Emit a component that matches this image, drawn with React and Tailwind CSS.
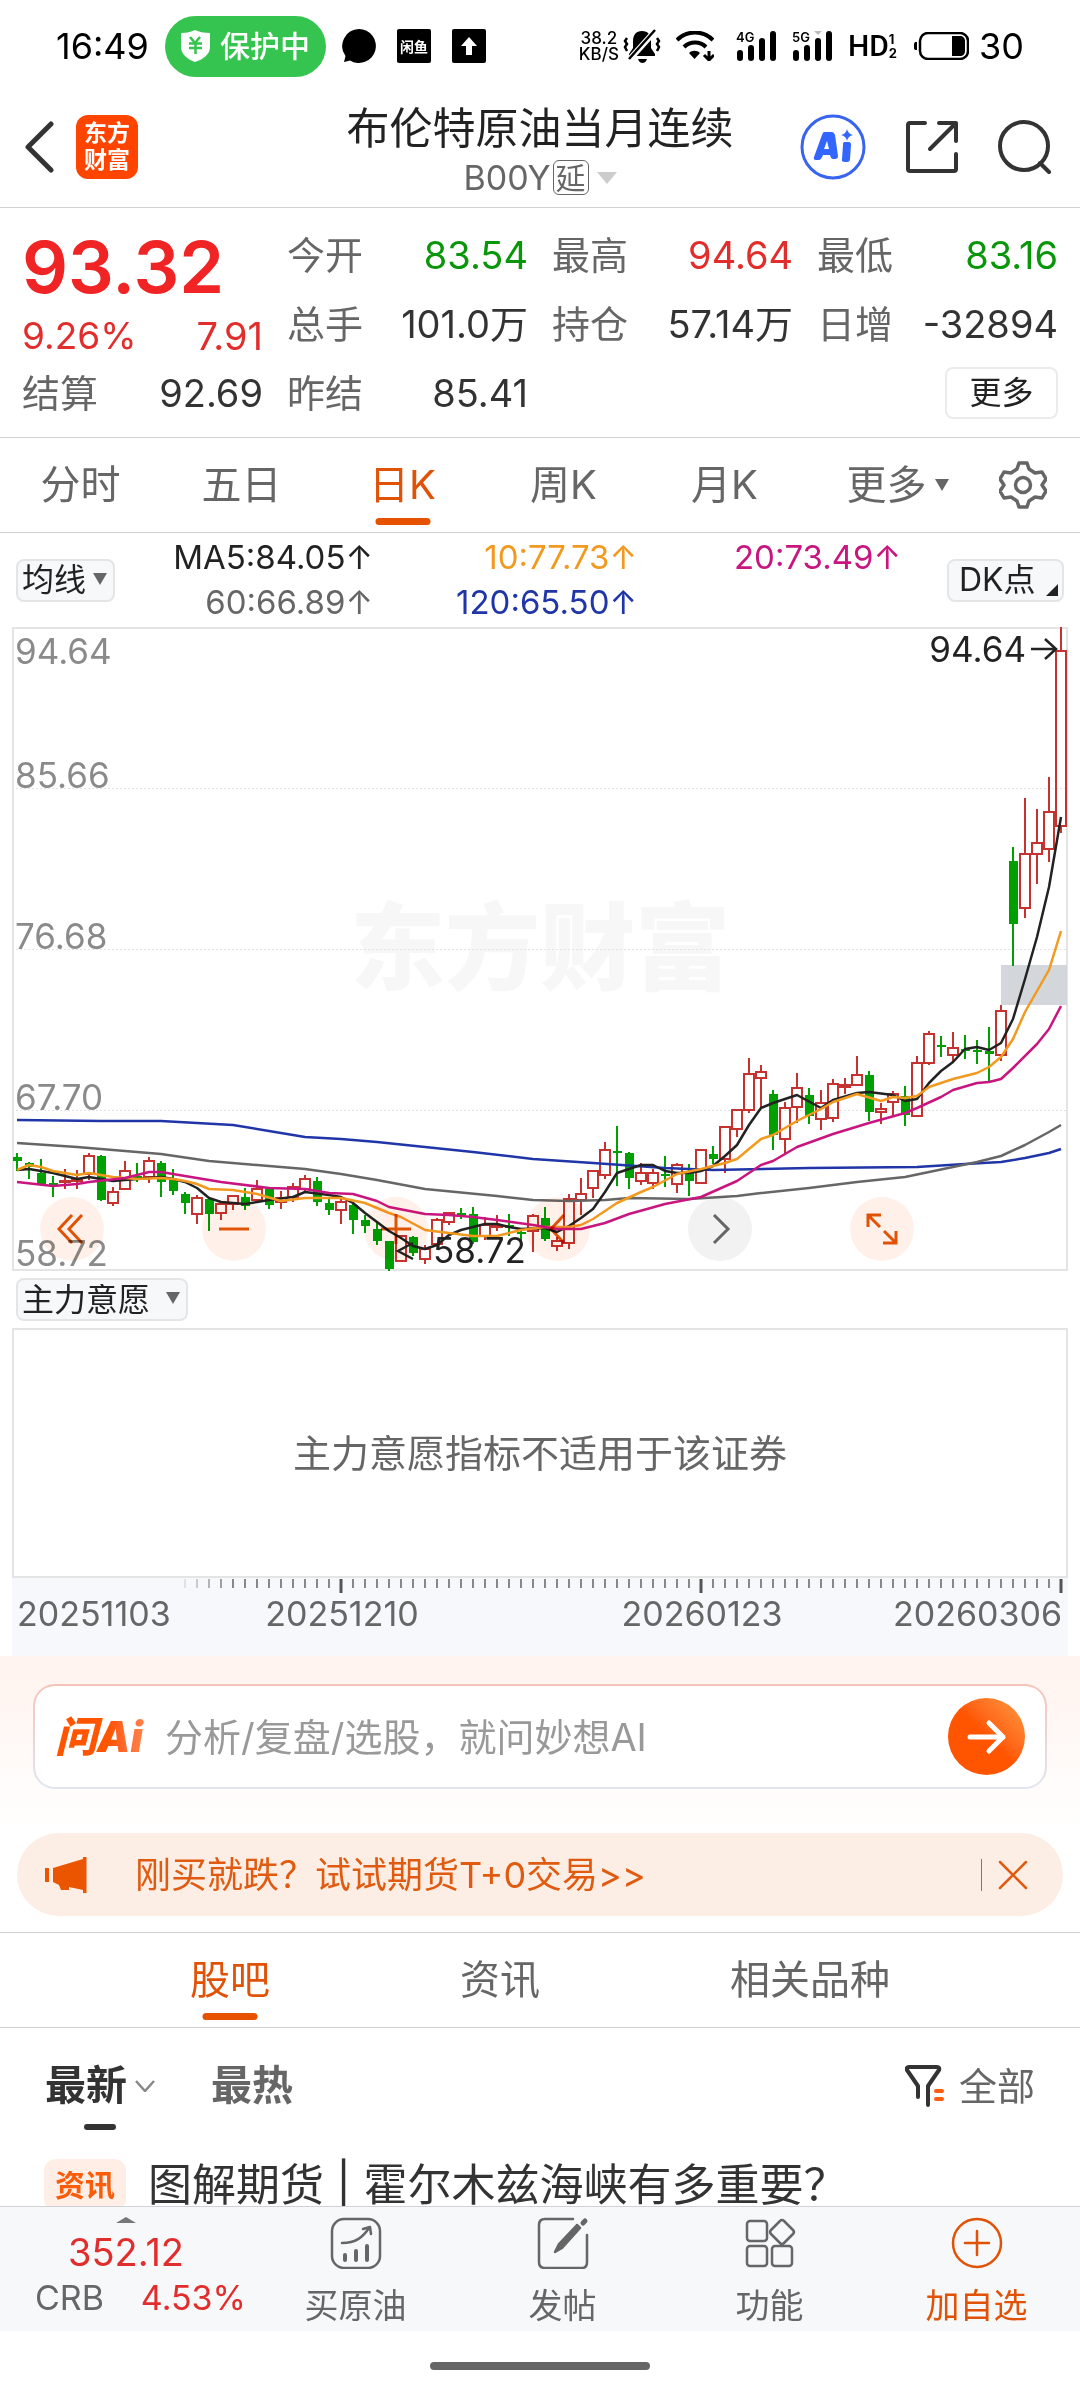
import React from 'react';

// [kind, high, body top, body bottom, low] in chart units, one per trading day
const CANDLES = [
  ['g', 526, 530, 534, 544], ['g', 535, 536, 540, 552], ['g', 532, 546, 557, 557], ['g', 549, 556, 559, 570],
  ['r', 542, 554, 555, 562], ['r', 543, 552, 554, 562], ['r', 526, 529, 547, 553], ['g', 528, 529, 573, 574],
  ['r', 560, 565, 576, 579], ['r', 534, 544, 562, 562], ['g', 536, 549, 550, 555], ['r', 530, 534, 550, 556],
  ['g', 534, 536, 555, 570], ['g', 542, 553, 564, 568], ['g', 565, 567, 576, 587], ['r', 568, 571, 587, 597],
  ['g', 571, 572, 587, 604], ['r', 576, 577, 586, 593], ['r', 568, 569, 577, 583], ['g', 561, 570, 579, 583],
  ['r', 553, 562, 573, 574], ['g', 562, 562, 578, 582], ['r', 564, 571, 575, 582], ['r', 556, 560, 570, 575],
  ['r', 548, 552, 562, 564], ['g', 550, 554, 575, 579], ['g', 571, 576, 583, 588], ['r', 572, 575, 583, 597],
  ['g', 577, 578, 593, 607], ['g', 588, 593, 599, 606], ['g', 596, 602, 614, 618], ['g', 614, 614, 642, 644],
  ['r', 608, 609, 634, 635], ['g', 609, 610, 626, 629], ['r', 618, 622, 632, 637], ['r', 591, 593, 617, 618],
  ['r', 585, 586, 595, 598], ['g', 581, 586, 587, 592], ['g', 580, 587, 615, 617], ['r', 590, 598, 609, 613],
  ['r', 588, 599, 600, 604], ['g', 587, 598, 601, 609], ['g', 601, 605, 606, 615], ['r', 587, 589, 604, 625],
  ['g', 580, 591, 612, 614], ['r', 610, 614, 619, 624], ['r', 567, 572, 616, 622], ['r', 551, 567, 573, 588],
  ['r', 543, 544, 561, 571], ['r', 515, 523, 548, 552], ['g', 499, 524, 525, 559], ['g', 525, 526, 551, 562],
  ['r', 536, 546, 554, 558], ['r', 542, 546, 556, 562], ['g', 529, 547, 549, 560], ['r', 536, 538, 557, 566],
  ['g', 537, 545, 554, 569], ['r', 522, 523, 556, 557], ['g', 519, 527, 532, 537], ['r', 499, 500, 532, 546],
  ['r', 482, 483, 502, 510], ['r', 431, 447, 483, 486], ['r', 438, 445, 451, 480], ['g', 463, 467, 508, 523],
  ['r', 475, 481, 512, 527], ['r', 446, 461, 480, 496], ['g', 461, 468, 489, 497], ['r', 463, 476, 492, 503],
  ['r', 452, 457, 491, 495], ['r', 451, 458, 460, 467], ['r', 429, 448, 458, 459], ['g', 444, 448, 485, 494],
  ['r', 476, 482, 485, 497], ['r', 464, 467, 475, 490], ['g', 459, 469, 488, 499], ['r', 429, 436, 489, 490],
  ['r', 404, 407, 436, 438], ['g', 409, 418, 419, 430], ['r', 405, 421, 428, 436], ['g', 408, 422, 423, 432],
  ['g', 413, 423, 425, 437], ['g', 400, 424, 427, 456], ['r', 378, 384, 428, 434], ['g', 220, 234, 297, 339],
  ['r', 171, 227, 281, 291], ['r', 182, 216, 227, 257], ['r', 150, 185, 222, 235], ['r', 0, 24, 199, 206],
];

// [day index, y]
const MA_LINES = [
  {
    name: 'MA120',
    color: '#1f35a8',
    points: [[0, 493], [7, 494], [12, 494], [15, 496], [18, 498], [21, 504], [24, 510], [27, 512], [30, 515], [34, 520], [38, 525], [43, 532], [48, 536], [54, 541], [58, 543], [66, 541], [75, 540], [79, 537], [82, 535], [84, 531], [86, 526], [87, 522]],
  },
  {
    name: 'MA60',
    color: '#666666',
    points: [[0, 516], [5, 520], [8, 523], [12, 527], [16, 534], [20, 538], [24, 542], [27, 547], [30, 553], [34, 562], [40, 569], [43, 573], [46, 574], [49, 573], [51, 571], [56, 572], [60, 569], [62, 566], [66, 561], [70, 555], [74, 550], [76, 545], [78, 540], [80, 535], [82, 529], [84, 518], [86, 505], [87, 498]],
  },
  {
    name: 'MA5',
    color: '#222222',
    points: [[0, 543], [1, 542], [3, 546], [5, 552], [6, 550], [8, 554], [10, 552], [12, 550], [13, 552], [14, 555], [15, 561], [16, 571], [17, 575], [19, 577], [20, 575], [21, 573], [23, 570], [24, 565], [26, 568], [27, 570], [28, 576], [29, 586], [30, 595], [31, 604], [32, 611], [33, 619], [34, 622], [35, 618], [36, 608], [37, 603], [38, 600], [39, 597], [40, 597], [41, 600], [42, 602], [44, 601], [45, 605], [46, 599], [47, 591], [48, 582], [49, 565], [50, 546], [51, 542], [52, 538], [53, 538], [54, 544], [55, 546], [56, 546], [57, 544], [58, 539], [59, 529], [60, 518], [61, 498], [62, 481], [63, 476], [65, 468], [67, 481], [68, 473], [70, 466], [71, 465], [73, 468], [74, 474], [75, 472], [76, 456], [77, 444], [78, 435], [79, 422], [80, 420], [81, 423], [82, 416], [83, 392], [84, 352], [85, 310], [86, 260], [87, 190]],
  },
  {
    name: 'MA10',
    color: '#f29a1f',
    points: [[0, 543], [1, 538], [2, 540], [3, 544], [5, 548], [6, 546], [8, 550], [10, 552], [12, 551], [13, 552], [14, 554], [15, 557], [16, 562], [18, 563], [20, 567], [22, 574], [24, 571], [27, 571], [29, 576], [30, 581], [31, 586], [32, 590], [34, 603], [36, 606], [38, 609], [40, 609], [42, 603], [44, 600], [46, 600], [47, 598], [48, 592], [50, 576], [52, 565], [53, 560], [55, 547], [57, 542], [59, 536], [60, 532], [62, 512], [63, 508], [65, 494], [67, 482], [68, 475], [70, 467], [72, 474], [73, 470], [74, 471], [75, 469], [76, 460], [78, 452], [80, 446], [81, 440], [82, 430], [83, 412], [84, 385], [85, 364], [86, 343], [87, 304]],
  },
  {
    name: 'MA20',
    color: '#c8157f',
    points: [[0, 555], [3, 559], [5, 557], [6, 555], [9, 551], [10, 548], [11, 545], [12, 545], [14, 549], [17, 555], [21, 561], [24, 562], [26, 566], [28, 567], [30, 574], [31, 580], [34, 587], [36, 588], [38, 590], [40, 593], [43, 598], [45, 602], [47, 602], [49, 596], [51, 587], [54, 577], [57, 570], [60, 554], [62, 538], [63, 534], [65, 520], [68, 507], [71, 496], [74, 486], [75, 481], [77, 470], [78, 463], [80, 456], [81, 455], [82, 452], [83, 441], [85, 417], [86, 402], [87, 379]],
  },
];

const xOf = (i) => 5 + i * 12;

const StatusBar = () => (
  <div className="flex h-[86px] items-center justify-between px-14 pt-1.5 text-black">
    <div className="flex items-center">
      <span className="w-[109px] text-[36px] leading-none">16:49</span>
      <span className="flex h-[61px] items-center gap-2.5 rounded-full bg-[#36c450] px-4 text-[30px] font-medium text-white">
        <svg className="h-8 w-[29px]" viewBox="0 0 29 32">
          <path d="M14 0c4 2 9 3 15 3v14c0 7-6 12-15 15C6 29 0 24 0 17V3c6 0 10-1 14-3z" fill="#fff" />
          <path d="M9 7l5 6 5-6M8 13.500h13M8 18h13M14.500 13v11" stroke="#36c450" strokeWidth="2.500" fill="none" />
        </svg>
        保护中
      </span>
      <svg className="ml-4 h-[34px] w-[34px]" viewBox="0 0 34 34">
        <path d="M17 0a17 17 0 1 1-9 31.500L2 33l1.500-6A17 17 0 0 1 17 0z" />
      </svg>
      <span className="ml-[21px] flex h-[34px] w-[34px] items-center justify-center rounded-xs bg-black text-[14px] font-bold text-white">闲鱼</span>
      <svg className="ml-[21px] h-[34px] w-[34px]" viewBox="0 0 34 34">
        <rect width="34" height="34" rx="2" />
        <path d="M17 8l8 9h-5v9h-6v-9H9z" fill="#fff" />
      </svg>
    </div>
    <div className="flex items-center">
      <span className="mr-1 flex flex-col items-center text-[17px] leading-4 font-medium">
        <span>38.2</span>
        <span>KB/S</span>
      </span>
      <svg className="h-[34px] w-[38px]" viewBox="0 0 38 34">
        <path d="M19 2c6 0 9 4 9 10v7l4 6v2H6v-2l4-6v-7c0-6 3-10 9-10zM15 30h9c-1 3-3 4-4.500 4S16 33 15 30z" />
        <path d="M6 31L33 1" stroke="#fff" strokeWidth="6" />
        <path d="M6 30L32 1" stroke="#000" strokeWidth="2.500" />
        <path d="M4 9l-2 3 2 3-2 3 2 4M34 9l2 3-2 3 2 3-2 4" stroke="#000" strokeWidth="2.500" fill="none" />
      </svg>
      <svg className="ml-[15px] h-[30px] w-[38px]" viewBox="0 0 38 30" fill="none" stroke="#000" strokeWidth="4">
        <path d="M1 9C11-1 27-1 37 9M8 16c6-6 16-6 22 0" />
        <path d="M13 22c3-3 8-3 11 0l-5.500 6z" fill="#000" stroke="none" />
        <path d="M33 20v9M28 24l5 5 5-5" strokeWidth="3" />
      </svg>
      <svg className="ml-[22px] h-[30px] w-[41px] overflow-visible" viewBox="0 0 41 30">
        <text x="0" y="11" fontSize="13" fontWeight="600">4G</text>
        <path d="M4 22v5M15 17v10M26 10v17M37 3v24" stroke="#000" strokeWidth="6" strokeLinecap="round" />
      </svg>
      <svg className="ml-[15px] h-[30px] w-[41px] overflow-visible" viewBox="0 0 41 30">
        <text x="0" y="11" fontSize="13" fontWeight="600">5G</text>
        <path d="M22 0h8l-4 4z" fill="#bbb" />
        <path d="M4 22v5M15 17v10M26 10v17M37 3v24" stroke="#000" strokeWidth="6" strokeLinecap="round" />
      </svg>
      <span className="ml-[15px] flex items-center">
        <span className="font-['Roboto'] text-[30px] leading-none font-medium">HD</span>
        <span className="flex flex-col text-[13px] leading-[14px] font-bold">
          <span>1</span>
          <span>2</span>
        </span>
      </span>
      <svg className="ml-[17px] h-7 w-[55px]" viewBox="0 0 55 28">
        <path d="M1 10c-2 3-2 6 0 8h2v-8z" />
        <rect x="6" y="1" width="48" height="26" rx="8" fill="none" stroke="#000" strokeWidth="2.500" />
        <path d="M38 4h8c3 0 5 2 5 5v10c0 3-2 5-5 5h-8z" />
      </svg>
      <span className="ml-2.5 text-[36px] leading-none">30</span>
    </div>
  </div>
);

const Header = () => (
  <header className="grid h-[122px] grid-cols-[1fr_auto_1fr] items-center border-b border-[#d0d0d0] px-6">
    <div className="flex items-center gap-[22px]">
      <button type="button" aria-label="返回">
        <svg className="h-[52px] w-[30px]" viewBox="0 0 30 52" fill="none" stroke="#333" strokeWidth="5" strokeLinecap="round" strokeLinejoin="round">
          <path d="M27 3L4 26l23 23" />
        </svg>
      </button>
      <span className="flex h-16 w-[62px] flex-col items-center justify-center rounded-xl bg-[#ff4400] text-[23px] leading-[27px] font-bold text-white">
        <span>东方</span>
        <span>财富</span>
      </span>
    </div>
    <div className="flex flex-col items-center pt-2">
      <h1 className="text-[43px] leading-[54px] text-[#222]">布伦特原油当月连续</h1>
      <button type="button" className="flex items-center text-[34px] leading-[46px] text-[#666]">
        B00Y
        <span className="ml-0.5 flex h-[35px] w-9 items-center justify-center rounded-md border border-[#666] text-[30px] leading-none">延</span>
        <svg className="ml-2 h-3 w-5" viewBox="0 0 20 12"><path d="M0 0h20L10 12z" fill="#ccc" /></svg>
      </button>
    </div>
    <div className="flex items-center justify-end gap-[39px] pr-1">
      <button type="button" aria-label="AI">
        <svg className="h-[66px] w-[66px]" viewBox="0 0 66 66">
          <circle cx="33" cy="33" r="31" fill="none" stroke="#3964f0" strokeWidth="3" />
          <path d="M24 18h8q2 0 3 3l3 21q0 3-3 3h-2q-2 0-3-4h-7q-2 5-4 5h-3q-3 0-2-3l8-22q1-3 2-3zM27 27l-3 8h5z" fill="#3366ff" fillRule="evenodd" />
          <path d="M44 28h5q2 0 2 3l-1 14q0 3-3 3h-2q-4 0-3-3l1-14q0-3 1-3zM47 15q1 5 6 6-5 1-6 6-1-5-6-6 5-1 6-6z" fill="#3366ff" />
        </svg>
      </button>
      <button type="button" aria-label="分享">
        <svg className="h-[54px] w-[54px]" viewBox="0 0 54 54" fill="none" stroke="#333" strokeWidth="4" strokeLinecap="round" strokeLinejoin="round">
          <path d="M20 3H5q-2 0-2 2v44q0 2 2 2h44q2 0 2-2V34M34 3h17v18M51 3L25 29" />
        </svg>
      </button>
      <button type="button" aria-label="搜索">
        <svg className="h-[54px] w-[54px]" viewBox="0 0 54 54" fill="none" stroke="#333" strokeWidth="4" strokeLinecap="round">
          <circle cx="26" cy="26" r="24" />
          <path d="M42 43l9 9" />
        </svg>
      </button>
    </div>
  </header>
);

const Stat = ({ label, value, color = 'text-[#333]' }) => (
  <div className="flex h-[69px] items-center justify-between">
    <span className="text-[#666]">{label}</span>
    <span className={color}>{value}</span>
  </div>
);

const Quote = () => (
  <section className="grid grid-cols-4 gap-x-6 border-b border-[#d0d0d0] px-[22px] pt-3 pb-2.5 text-[38px] leading-none">
    <div>
      <div className="flex h-[93px] items-center text-[72px] font-semibold text-[#f02424]">93.32</div>
      <div className="flex h-[45px] items-center justify-between text-[#e22d2d]">
        <span className="text-[37px]">9.26%</span>
        <span>7.91</span>
      </div>
      <Stat label="结算" value="92.69" />
    </div>
    <div>
      <Stat label="今开" value="83.54" color="text-[#0a960a]" />
      <Stat label="总手" value="101.0万" />
      <Stat label="昨结" value="85.41" />
    </div>
    <div>
      <Stat label="最高" value="94.64" color="text-[#e22d2d]" />
      <Stat label="持仓" value="57.14万" />
    </div>
    <div>
      <Stat label="最低" value="83.16" color="text-[#0a960a]" />
      <Stat label="日增" value="-32894" />
      <div className="flex h-[69px] items-center justify-end">
        <button type="button" className="h-[52px] w-[113px] rounded-lg border-2 border-[#ebebeb] text-[32px] text-[#222]">更多</button>
      </div>
    </div>
  </section>
);

const PERIODS = ['分时', '五日', '日K', '周K', '月K'];

const PeriodTabs = () => (
  <nav className="grid h-[95px] grid-cols-[repeat(6,minmax(0,1fr))_114px] border-b border-[#d0d0d0] text-[40px] leading-none text-[#666]">
    {PERIODS.map((name) => (
      <button key={name} type="button" className={`relative ${name === '日K' ? 'text-[#e05206]' : ''}`}>
        {name}
        {name === '日K' && <span className="absolute bottom-[7px] left-1/2 h-[7px] w-[55px] -translate-x-1/2 rounded-full bg-[#e65200]" />}
      </button>
    ))}
    <button type="button" className="flex items-center justify-center gap-2 pl-6">
      更多
      <svg className="h-3 w-3.5" viewBox="0 0 14 12"><path d="M0 0h14L7 12z" fill="#666" /></svg>
    </button>
    <button type="button" aria-label="设置" className="flex items-center justify-center">
      <svg className="h-12 w-12" viewBox="0 0 48 48" fill="none" stroke="#666" strokeWidth="3.500" strokeLinejoin="round">
        <path d="M20 2h8l2 6 6 4 7-1 4 7-4 6 4 6-4 7-7-1-6 4-2 6h-8l-2-6-6-4-7 1-4-7 4-6-4-6 4-7 7 1 6-4z" />
        <circle cx="24" cy="24" r="7.500" />
      </svg>
    </button>
  </nav>
);

const Picker = ({ label, value, className }) => (
  <span className={`relative inline-flex ${className}`}>
    <select aria-label={label} className="h-[43px] w-full appearance-none rounded-lg border-2 border-[#e4e5e7] bg-[#f7f8fa] pl-1 text-[32px] leading-none text-[#222]">
      <option>{value}</option>
    </select>
    <svg className="pointer-events-none absolute top-3.5 right-2 h-3 w-3.5" viewBox="0 0 14 12"><path d="M0 0h14L7 12z" fill="#666" /></svg>
  </span>
);

const Averages = () => (
  <div className="flex h-[94px] items-center px-4">
    <Picker label="主图指标" value="均线" className="w-[99px]" />
    <div className="grid grow grid-cols-[257fr_263fr_263fr] text-right text-[33px] leading-[45px]">
      <span className="text-[#222]">MA5:84.05↑</span>
      <span className="text-[#f29a1f]">10:77.73↑</span>
      <span className="text-[#c8157f]">20:73.49↑</span>
      <span className="text-[#666]">60:66.89↑</span>
      <span className="text-[#1f35a8]">120:65.50↑</span>
    </div>
    <button type="button" className="relative ml-[46px] h-[43px] w-[117px] rounded-lg border-2 border-[#e4e5e7] bg-[#f7f8fa] pl-2.5 text-left text-[32px] leading-none text-[#222]">
      DK点
      <svg className="absolute right-1 bottom-1 h-3 w-3" viewBox="0 0 12 12"><path d="M12 0v12H0z" fill="#222" /></svg>
    </button>
  </div>
);

const Candle = ({ index, data }) => {
  const [kind, high, top, bottom, low] = data;
  const x = xOf(index);
  if (kind === 'g') {
    return (
      <g fill="#00a000">
        <rect x={x - 1} y={high} width="2" height={low - high} />
        <rect x={x - 4} y={top} width="9" height={Math.max(bottom - top, 2)} />
      </g>
    );
  }
  return (
    <g stroke="#c5322f" strokeWidth="2" fill="none">
      <path d={`M${x} ${high}V${top}M${x} ${bottom}V${low}`} />
      <rect x={x - 5} y={top} width="10" height={bottom - top} />
    </g>
  );
};

const TOOLS = [
  { label: '快退', d: 'M16 2L3 16l13 14M26 2L13 16l13 14' },
  { label: '缩小', d: 'M1 16h30' },
  { label: '放大', d: 'M1 16h30M16 1v30' },
  { label: '左移', d: 'M22 2L9 16l13 14' },
  { label: '右移', d: 'M10 2l14 14-14 14', gray: true },
  { label: '全屏', d: 'M2 14V2h13M2 2l12 12M30 18v12H17M30 30L18 18' },
];

const KLine = () => (
  <div className="relative mx-3">
    <svg className="block w-full" viewBox="0 0 1056 644" role="img" aria-label="日K线">
      <text x="528" y="356" textAnchor="middle" fontSize="95" fontWeight="900" fill="#f7f7f7">东方财富</text>
      <path d="M0 161.500h1056M0 322.500h1056M0 483.500h1056" stroke="#e2e2e2" strokeDasharray="2 2" />
      <rect x="1" y="1" width="1054" height="642" fill="none" stroke="#e4e4e4" strokeWidth="2" />
      <rect x="989" y="338" width="66" height="40" fill="#d3d6db" />
      {CANDLES.map((c, i) => <Candle key={i} index={i} data={c} />)}
      {MA_LINES.map((line) => (
        <polyline
          key={line.name}
          points={line.points.map(([i, y]) => `${xOf(i)},${y}`).join(' ')}
          fill="none"
          stroke={line.color}
          strokeWidth="2.500"
          strokeLinejoin="round"
        />
      ))}
      <g fontSize="35" fill="#8a8a8a">
        <text x="3" y="37">94.64</text>
        <text x="3" y="161">85.66</text>
        <text x="3" y="322">76.68</text>
        <text x="3" y="483">67.70</text>
        <text x="3" y="639">58.72</text>
      </g>
      <g fontSize="35" fill="#222">
        <text x="1014" y="35" textAnchor="end">94.64</text>
        <text x="421" y="636">58.72</text>
      </g>
      <path d="M1019 22h24M1033 12l11 10-11 10M401 616l-15 8 15 8" fill="none" stroke="#222" strokeWidth="2.500" />
    </svg>
    <div className="absolute bottom-2.5 left-7 flex gap-[98px] mix-blend-multiply">
      {TOOLS.map((tool) => (
        <button
          key={tool.label}
          type="button"
          aria-label={tool.label}
          className={`flex h-16 w-16 items-center justify-center rounded-full ${tool.gray ? 'bg-[#f2f2f2]' : 'bg-[#fff1ea]'}`}
        >
          <svg className="h-8 w-8" viewBox="0 0 32 32" fill="none" stroke={tool.gray ? '#666' : '#e05206'} strokeWidth="3">
            <path d={tool.d} />
          </svg>
        </button>
      ))}
    </div>
  </div>
);

const SubChart = () => (
  <div className="mx-3">
    <div className="flex h-[57px] items-center pl-1">
      <Picker label="副图指标" value="主力意愿" className="w-[172px]" />
    </div>
    <div className="flex h-[250px] items-center justify-center border-2 border-[#e4e4e4] text-[38px] text-[#666]">主力意愿指标不适用于该证券</div>
    <svg className="block w-full bg-[#f7f8fb]" viewBox="0 0 1056 78" role="img" aria-label="日期">
      {CANDLES.map((_, i) => {
        const major = i === 27 || i === 57 || i === 87;
        if (i < 14) return null;
        return (
          <path
            key={i}
            d={`M${xOf(i)} 1V${major ? 15 : 10}`}
            stroke={major ? '#555' : '#888'}
            strokeWidth={major ? 3 : 2}
            opacity={Math.min(1, (i - 13) / 5)}
          />
        );
      })}
      <g fontSize="34" fill="#666">
        <text x="5" y="48">20251103</text>
        <text x="330" y="48" textAnchor="middle">20251210</text>
        <text x="690" y="48" textAnchor="middle">20260123</text>
        <text x="1050" y="48" textAnchor="end">20260306</text>
      </g>
    </svg>
  </div>
);

const AskBar = () => (
  <section className="bg-linear-to-b from-[#fff3ee] to-white px-[33px] pt-7 pb-11">
    <div className="rounded-[22px] bg-linear-to-b from-[#f7c3b8] to-[#dfe5f1] p-0.5">
      <form className="flex h-[101px] items-center rounded-[20px] bg-white px-5">
        <label htmlFor="ask" className="w-[110px] bg-linear-to-r from-[#ff5500] from-50% to-[#ff9a66] bg-clip-text text-[42px] leading-none font-black whitespace-nowrap text-transparent italic">
          问Ai
        </label>
        <input id="ask" type="text" placeholder="分析/复盘/选股，就问妙想AI" className="min-w-0 grow text-[38px] leading-none outline-none placeholder:text-[#999]" />
        <button type="button" aria-label="发送" className="flex h-[77px] w-[77px] items-center justify-center rounded-full bg-linear-to-tr from-[#ff5500] from-50% to-[#ff9a40]">
          <svg className="h-9 w-10" viewBox="0 0 40 36" fill="none" stroke="#fff" strokeWidth="5" strokeLinecap="round" strokeLinejoin="round">
            <path d="M3 18h33M22 4l14 14-14 14" />
          </svg>
        </button>
      </form>
    </div>
  </section>
);

const Promo = () => (
  <div className="mx-[17px] mb-4 flex h-[83px] items-center rounded-full bg-[#fceee5] pr-[35px] pl-7">
    <svg className="h-9 w-[42px]" viewBox="0 0 42 36" fill="#eb5500">
      <path d="M0 11h4v14H0zM8 11L38 2V0h3.500v36H38v-3l-14-3v3H16l-2-5-6-3z" />
    </svg>
    <a href="#futures" className="ml-12 grow text-[36px] leading-none text-[#e05a10]">刚买就跌？试试期货T+0交易&gt;&gt;</a>
    <span className="mr-4 h-8 w-px bg-[#e05a10]" />
    <button type="button" aria-label="关闭">
      <svg className="block h-[30px] w-[30px]" viewBox="0 0 30 30" stroke="#e05a10" strokeWidth="2.500" strokeLinecap="round">
        <path d="M2 2l26 26M28 2L2 28" />
      </svg>
    </button>
  </div>
);

const Community = () => (
  <section className="min-h-0 flex-1 overflow-hidden">
    <nav className="flex h-24 justify-evenly border-y border-[#d0d0d0] text-[40px] leading-none text-[#666]">
      <button type="button" className="relative text-[#e05206]">
        股吧
        <span className="absolute bottom-[7px] left-1/2 h-[7px] w-[55px] -translate-x-1/2 rounded-full bg-[#e65200]" />
      </button>
      <button type="button">资讯</button>
      <button type="button">相关品种</button>
    </nav>
    <div className="flex h-[115px] items-center px-[45px] text-[41px] leading-none font-bold text-[#666]">
      <button type="button" className="relative flex items-center gap-2 text-[#333]">
        最新
        <svg className="h-3 w-5" viewBox="0 0 20 12" fill="none" stroke="#888" strokeWidth="2.500"><path d="M1 1l9 10 9-10" /></svg>
        <span className="absolute top-full left-[39px] mt-[18px] h-1.5 w-8 rounded-full bg-[#333]" />
      </button>
      <button type="button" className="ml-14">最热</button>
      <button type="button" className="ml-auto flex items-center gap-3.5 text-[38px] font-normal">
        <svg className="h-[42px] w-10" viewBox="0 0 40 42" fill="none" stroke="#333" strokeWidth="4" strokeLinecap="round" strokeLinejoin="round">
          <path d="M13 32V21L2 5q-1-3 2-3h28q3 0 2 3L23 21v19" />
          <path d="M31 26h6M31 34h6" stroke="#ff5a0f" />
        </svg>
        全部
      </button>
    </div>
    <a href="#post" className="flex items-center pt-3 pl-11">
      <span className="flex h-[52px] w-[82px] items-center justify-center rounded-xl bg-[#feeee6] text-[30px] font-bold text-[#fa5c0a]">资讯</span>
      <span className="ml-[22px] text-[44px] leading-[60px] text-[#333]">图解期货 | 霍尔木兹海峡有多重要？</span>
    </a>
  </section>
);

const NavItem = ({ icon, text, active }) => (
  <button type="button" className={`flex flex-1 flex-col items-center pt-2.5 text-[34px] leading-none ${active ? 'text-[#e05206]' : 'text-[#666]'}`}>
    <svg className="h-[52px] w-[52px]" viewBox="0 0 52 52" fill="none" stroke="currentColor" strokeWidth="2.500" strokeLinecap="round" strokeLinejoin="round">
      {icon}
    </svg>
    <span className="mt-5">{text}</span>
  </button>
);

const BottomNav = () => (
  <footer>
    <nav className="flex h-[125px] border-t border-[#cfd1d4] bg-[#f7f8fa]">
      <button type="button" className="flex w-[252px] flex-col items-center pt-2.5 leading-none">
        <svg className="h-1.5 w-5" viewBox="0 0 20 6"><path d="M10 0l10 6H0z" fill="#777" /></svg>
        <span className="mt-2.5 text-[38px] text-[#e22d2d]">352.12</span>
        <span className="mt-2.5 flex w-full justify-between pr-1.5 pl-[35px] text-[34px]">
          <span className="text-[#666]">CRB</span>
          <span className="text-[#e22d2d]">4.53%</span>
        </span>
      </button>
      <NavItem
        text="买原油"
        icon={
          <>
            <rect x="2" y="2" width="48" height="49" rx="12" />
            <path d="M12 26c14 0 21-6 27-15M33 12l7-2 1 7" />
            <path d="M15 38v5M26 34v9M37 29v14" strokeWidth="4" />
          </>
        }
      />
      <NavItem
        text="发帖"
        icon={
          <>
            <path d="M36 2H8Q2 2 2 8v37q0 6 6 6h37q5 0 5-6V18" />
            <path d="M43 11l-3-3-18 19-4 8 7-4z" fill="currentColor" />
            <path d="M46 6l2-2" strokeWidth="5" />
          </>
        }
      />
      <NavItem
        text="功能"
        icon={
          <>
            <rect x="3" y="4" width="20" height="20" rx="3" />
            <rect x="3" y="29" width="20" height="20" rx="3" />
            <rect x="28" y="29" width="20" height="20" rx="3" />
            <path d="M36 4q2-2 4 0l9 9q2 2 0 4l-9 9q-2 2-4 0l-9-9q-2-2 0-4z" />
          </>
        }
      />
      <NavItem
        active
        text="加自选"
        icon={
          <>
            <circle cx="26" cy="26" r="24" />
            <path d="M26 14v24M14 26h24" />
          </>
        }
      />
    </nav>
    <div className="flex h-[69px] items-center justify-center">
      <span className="h-2 w-[220px] rounded-full bg-[#666]" />
    </div>
  </footer>
);

const App = () => (
  <div className="flex h-screen flex-col overflow-hidden bg-white font-['Inter','Noto_Sans_CJK_SC',sans-serif]">
    <StatusBar />
    <Header />
    <Quote />
    <PeriodTabs />
    <Averages />
    <KLine />
    <SubChart />
    <AskBar />
    <Promo />
    <Community />
    <BottomNav />
  </div>
);

export default App;
